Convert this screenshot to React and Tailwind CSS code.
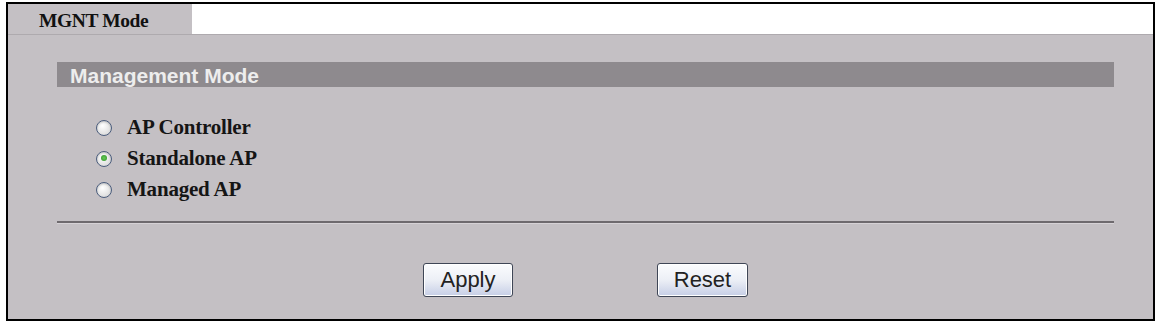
import { useState } from 'react';

const options = ['AP Controller', 'Standalone AP', 'Managed AP'];

function Radio({ checked }) {
  return (
    <span className="relative inline-block w-[16px] h-[16px] rounded-full border-[1.5px] border-[#4b5d7d] bg-[radial-gradient(circle_at_40%_35%,#ffffff,#d2d2d2)] shadow-[inset_0_1px_2px_rgba(0,0,0,0.2)]">
      {checked && (
        <span className="absolute left-[3.5px] top-[3.5px] w-[6px] h-[6px] rounded-full bg-[radial-gradient(circle,#66cc55,#2f8f2a)]" />
      )}
    </span>
  );
}

export default function App() {
  const [mode, setMode] = useState('Standalone AP');

  return (
    <div className="w-[1159px] h-[323px] bg-white pt-[2px] pl-[6px]">
      <div className="w-[1149px] h-[319px] border-2 border-black bg-[#c4c0c4] flex flex-col">
        {/* tab row */}
        <div className="flex h-[31px] border-b border-[#aeaaae]">
          <div className="w-[184px] bg-[#c4c0c4] pl-[31px] pt-[7px] text-[19.5px] leading-[20px] font-bold text-[#111] font-['Liberation_Serif',serif] tracking-[-0.4px]">
            MGNT Mode
          </div>
          <div className="flex-1 bg-white" />
        </div>

        <div className="pl-[49px] pr-[39px] pt-[27px]">
          <div className="h-[25px] bg-[#8e8a8e] pl-[13px] pt-[1px] text-[21px] leading-[25px] font-bold text-[#ededed] font-['Liberation_Sans',sans-serif]">
            Management Mode
          </div>

          <div className="pl-[39px] pt-[25px] flex flex-col">
            {options.map((o) => (
              <label
                key={o}
                onClick={() => setMode(o)}
                className="flex items-center gap-[15px] h-[31px] cursor-pointer"
              >
                <Radio checked={mode === o} />
                <span className="text-[21px] font-bold text-[#151515] font-['Liberation_Serif',serif] tracking-[-0.2px]">{o}</span>
              </label>
            ))}
          </div>

          <div className="mt-[16px] h-[3px] border-t-2 border-[#6e6a6e] border-b border-b-[#d6d2d6]" />

          <div className="flex justify-center gap-[144px] pt-[39px]">
            <button className="w-[90px] h-[34px] rounded-[3px] border border-[#3f4656] bg-[linear-gradient(#fbfcfe,#eceff6_50%,#c6cee6)] text-[22px] leading-[30px] text-[#222] font-['Liberation_Sans',sans-serif] shadow-[inset_0_0_0_1px_#fff]">
              Apply
            </button>
            <button className="w-[91px] h-[34px] rounded-[3px] border border-[#3f4656] bg-[linear-gradient(#fbfcfe,#eceff6_50%,#c6cee6)] text-[22px] leading-[30px] text-[#222] font-['Liberation_Sans',sans-serif] shadow-[inset_0_0_0_1px_#fff]">
              Reset
            </button>
          </div>
        </div>
      </div>
    </div>
  );
}
